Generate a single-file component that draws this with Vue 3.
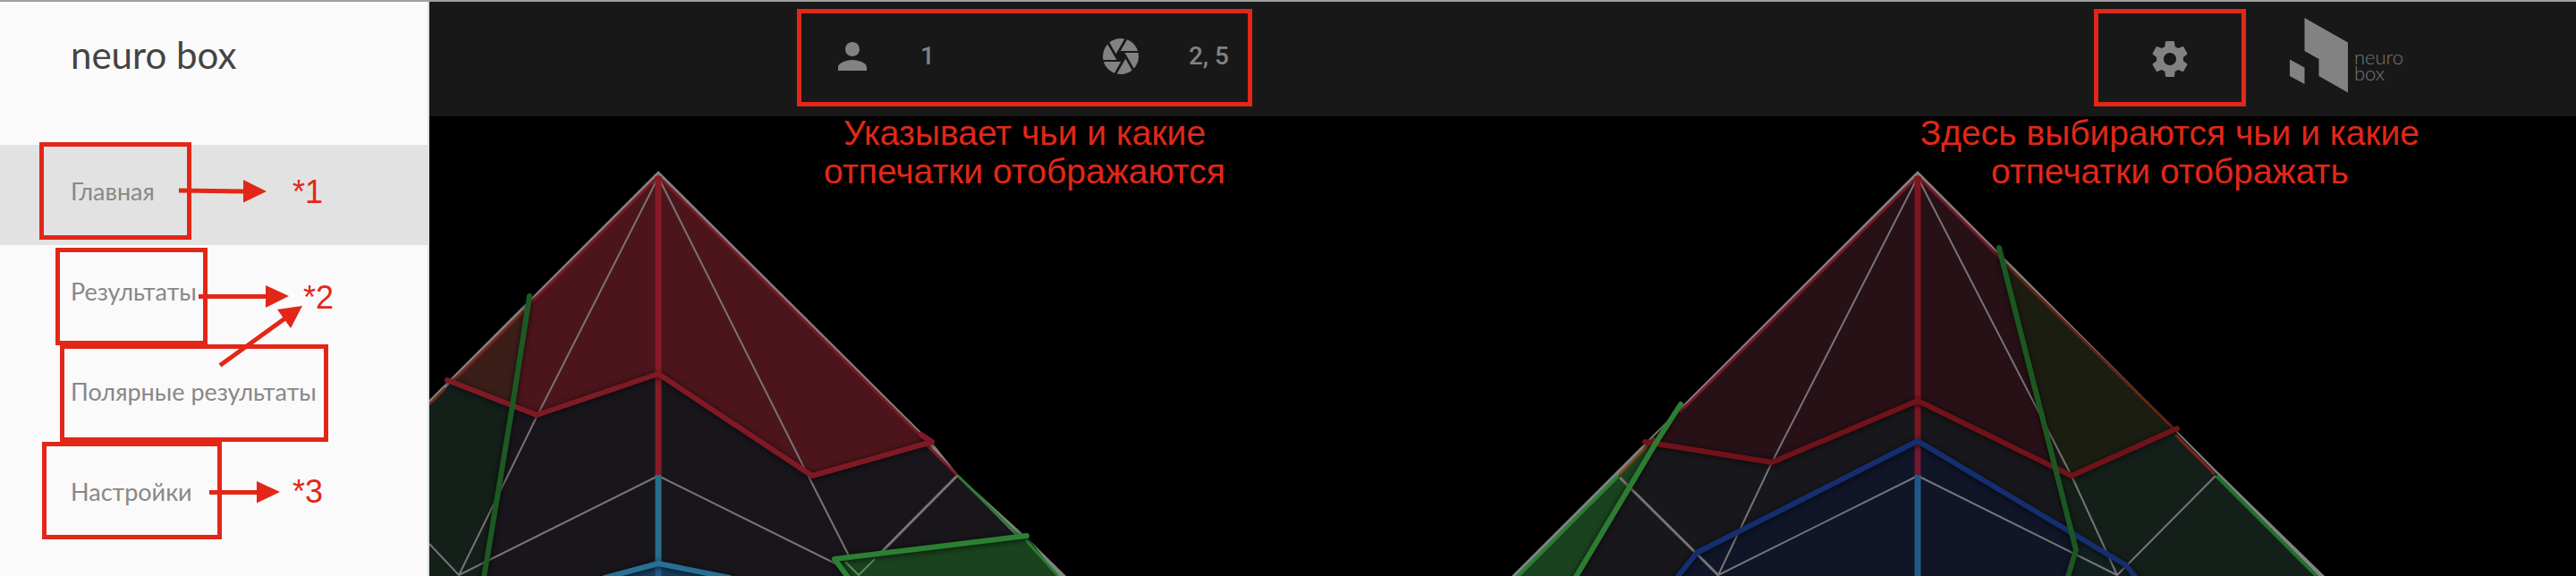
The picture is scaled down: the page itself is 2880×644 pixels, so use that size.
<script setup>
import { ref } from 'vue'

const links = ['Главная', 'Результаты', 'Полярные результаты', 'Настройки']
const active = ref(0)
</script>

<template>
  <div class="page">
    <aside class="sidebar">
      <h1 class="title">neuro box</h1>
      <nav class="nav">
        <a
          v-for="(label, i) in links"
          :key="label"
          href="#"
          class="nav-link"
          :class="{ active: active === i }"
          @click.prevent="active = i"
        >{{ label }}</a>
      </nav>

      <svg class="marks" viewBox="0 0 480 644" aria-hidden="true">
        <g class="mark-line">
          <rect x="46.5" y="161.5" width="165" height="104" />
          <rect x="64.5" y="279.5" width="165" height="104" />
          <rect x="69.5" y="387.5" width="295" height="104" />
          <rect x="49.5" y="496.5" width="196" height="104" />
          <path d="M200 213L273 214M222 331.5H298M246 408.500L320 355M234 550.500H288" />
        </g>
        <g class="mark-head">
          <path d="M272 201L298 214L272 226.500Z" />
          <path d="M297 319L323 331L297 344Z" />
          <path d="M310 346L338 342L325 367Z" />
          <path d="M287 538L313 550L287 562.500Z" />
        </g>
      </svg>
      <span class="note note-1">*1</span>
      <span class="note note-2">*2</span>
      <span class="note note-3">*3</span>
    </aside>

    <main class="main">
      <header class="topbar">
        <div class="frame status">
          <svg class="icon" viewBox="0 0 24 24" aria-hidden="true">
            <path d="M12 12c2.210 0 4-1.790 4-4s-1.790-4-4-4-4 1.790-4 4 1.790 4 4 4zm0 2c-2.670 0-8 1.340-8 4v2h16v-2c0-2.660-5.330-4-8-4z" />
          </svg>
          <span class="value person">1</span>
          <svg class="icon" viewBox="0 0 24 24" aria-hidden="true">
            <path d="M9.400 10.500l4.770-8.260C13.470 2.090 12.750 2 12 2c-2.400 0-4.600.85-6.320 2.250l3.660 6.350.06-.1zM21.540 9c-.92-2.920-3.150-5.260-6-6.340L11.880 9h9.660zm.26 1h-7.490l.29.5 4.760 8.250C21 16.970 22 14.610 22 12c0-.69-.07-1.350-.2-2zM8.540 12l-3.900-6.750C3.010 7.030 2 9.390 2 12c0 .69.07 1.350.2 2h7.490l-1.150-2zm-6.080 3c.92 2.920 3.150 5.260 6 6.340L12.120 15H2.460zm11.270 0l-3.900 6.760c.7.15 1.420.24 2.170.24 2.400 0 4.600-.85 6.320-2.250l-3.660-6.350-.93 1.600z" />
          </svg>
          <span class="value">2, 5</span>
          <p class="caption">Указывает чьи и какие<br />отпечатки отображаются</p>
        </div>

        <div class="frame picker">
          <button class="gear" type="button" aria-label="Настройки">
            <svg class="icon" viewBox="0 0 24 24" aria-hidden="true">
              <path d="M19.430 12.980c.04-.32.07-.64.07-.98s-.03-.66-.07-.98l2.110-1.650c.19-.15.24-.42.12-.64l-2-3.460c-.12-.22-.39-.3-.61-.22l-2.490 1c-.52-.4-1.080-.73-1.690-.98l-.38-2.650C14.460 2.180 14.250 2 14 2h-4c-.25 0-.46.18-.49.42l-.38 2.650c-.61.25-1.170.59-1.690.98l-2.490-1c-.23-.09-.49 0-.61.22l-2 3.460c-.13.22-.07.49.12.64l2.110 1.650c-.04.32-.07.65-.07.98s.03.66.07.98l-2.110 1.650c-.19.15-.24.42-.12.64l2 3.460c.12.22.39.3.61.22l2.490-1c.52.4 1.080.73 1.690.98l.38 2.650c.03.24.24.42.49.42h4c.25 0 .46-.18.49-.42l.38-2.650c.61-.25 1.170-.59 1.690-.98l2.490 1c.23.09.49 0 .61-.22l2-3.460c.12-.22.07-.49-.12-.64l-2.110-1.650zM12 15.500c-1.930 0-3.500-1.570-3.500-3.500s1.570-3.500 3.500-3.500 3.500 1.570 3.500 3.500-1.570 3.500-3.500 3.500z" />
            </svg>
          </button>
          <p class="caption">Здесь выбираются чьи и какие<br />отпечатки отображать</p>
        </div>

        <div class="logo">
          <svg class="logo-mark" viewBox="2560 20 65 84" aria-hidden="true">
            <path d="M2576.500 20L2625 47.500V103.500L2592.500 85V66L2576.500 57ZM2560 66.500L2576.500 75.500V94L2560 85Z" />
          </svg>
          <span class="logo-text">neuro<br />box</span>
        </div>
      </header>

      <svg class="charts" viewBox="480 130 2400 514" aria-hidden="true">
        <!-- left pyramid -->
        <g>
          <path fill="#828282" d="M736 191L480 447V644H1192L1147 600L1072 532L1044 497Z" />
          <path fill="#18161b" d="M736 197L480 453V644H1180L1071 533L1037 500Z" />
          <path fill="#141f19" d="M480 453L504 428L573 453L541 644H480Z" />
          <path fill="#4c151c" d="M736 197L588 345L573 453L600 464L736 418L908 532L1038 494Z" />
          <path fill="#3b1e18" d="M588 345L504 428L573 453Z" />
          <path class="edge" stroke="#7b1a24" d="M590 342L736 197L1034 492" />
          <path class="edge" stroke="#732b1e" d="M586 347L506 426M498 434L480 452" />
          <path class="grid" d="M734 202L601 464L513 643L736 532L960 643L899 523L738 202M480 608L513 643" />
          <path class="grid thick" d="M960 643L1070 532" />
          <path class="line-flat" stroke="#861b27" d="M736 197V532" />
          <path class="line-flat" stroke="#276e8a" d="M736 531V644" />
          <path fill="#173b60" d="M678 646L736 631L816 646Z" />
          <path class="line-flat" stroke="#1f5a8e" d="M736 630V644" />
          <path fill="#19421d" d="M933 625L1148 599L1182 644H948Z" />
          <path class="grid faint" d="M945 628L960 643L978 625" />
          <path class="edge" stroke="#861b27" d="M1037 498L1070 531" />
          <path class="edge" stroke="#2a7c31" d="M1071 532L1138 598M1147 604L1183 644" />
          <g class="raised">
            <path class="line" stroke="#7f1a25" d="M500 425L600 464L736 418L908 532L1042 494L1030 486" />
            <path class="line" stroke="#1d5922" d="M592 331L573 453L541 646" />
            <path class="line" stroke="#267095" d="M676 646L736 630L816 646" />
            <path class="line" stroke="#2c8033" d="M950 648L933 625L1148 599" />
          </g>
        </g>

        <!-- right pyramid -->
        <g>
          <path fill="#828282" d="M2144 191L1690 644H2599L2478 526Z" />
          <path fill="#18171b" d="M2144 197L1697 644H2590L2476 532Z" />
          <path fill="#271116" d="M2144 197L1843 494L1981 517L2144 448L2297 520L2238 288Z" />
          <path fill="#1c1d12" d="M2240 292L2297 520L2316 532L2430 479Z" />
          <path fill="#141f19" d="M2297 520L2316 532L2430 480L2590 644H2312L2321 615Z" />
          <path fill="#101528" d="M2144 493L2317 596L2321 615L2312 644H1875L1897 618Z" />
          <path fill="#10201f" d="M2317 596L2377 632L2387 644H2312L2321 615Z" />
          <path fill="#19421d" d="M1852 490L1697 644H1762Z" />
          <path class="edge" stroke="#791924" d="M1878 461L2144 197L2236 288" />
          <path class="edge" stroke="#632514" d="M2243 296L2430 479" />
          <path class="edge" stroke="#7c2420" d="M2432 486L2476 530" />
          <path class="edge" stroke="#774521" d="M1850 490L1810 531" />
          <path class="edge thick" stroke="#298032" d="M1809 532L1696 645" />
          <path class="edge thick" stroke="#237029" d="M2478 532L2591 645" />
          <path class="grid" d="M2142 202L1981 517L1921 643L2144 532L2367 643L2316 532L2146 202" />
          <path class="grid" d="M2367 643L2477 532" />
          <path class="grid thick" d="M1921 643L1811 534" />
          <path class="line-flat" stroke="#7c151f" d="M2144 197V494" />
          <path class="line-flat" stroke="#711832" d="M2144 494V532" />
          <path class="line-flat" stroke="#1f5888" d="M2144 531V644" />
          <g class="raised">
            <path class="line" stroke="#701219" d="M1839 494L1981 517L2144 448L2316 532L2434 479" />
            <path class="line" stroke="#142f70" d="M1873 648L1897 618L2144 493L2377 632L2388 646" />
            <path class="line" stroke="#2c7c32" d="M1879 452L1852 494L1760 648" />
            <path class="line" stroke="#1c5721" d="M2235 277L2297 520L2321 615L2311 648" />
          </g>
        </g>
      </svg>
    </main>
  </div>
</template>

<style>
body {
  margin: 0;
  background: #000;
}
</style>

<style scoped>
.page {
  display: flex;
  min-height: 100vh;
  box-sizing: border-box;
  border-top: 2px solid #a0a0a0;
  background: #000;
}

.sidebar {
  position: relative;
  flex: none;
  width: 480px;
  box-sizing: border-box;
  border-right: 2px solid #dcdfdf;
  background: #fafafa;
  font-family: Lato, "Open Sans", sans-serif;
}

.title {
  margin: 0;
  padding: 33px 0 0 79px;
  height: 127px;
  color: #444;
  font-size: 42px;
  font-weight: 400;
  line-height: 52px;
}

.nav {
  display: flex;
  flex-direction: column;
}

.nav-link {
  padding: 0 0 8px 79px;
  color: #888;
  font-size: 27px;
  line-height: 104px;
  text-decoration: none;
}

.nav-link.active {
  background: #e2e2e2;
}

.marks {
  position: absolute;
  top: -2px;
  left: 0;
  width: 480px;
  height: 644px;
  pointer-events: none;
}

.mark-line {
  fill: none;
  stroke: #e22718;
  stroke-width: 5;
}

.mark-head {
  fill: #e22718;
}

.note {
  position: absolute;
  color: #e22718;
  font-family: "Liberation Sans", Arial, sans-serif;
  font-size: 36px;
  line-height: 44px;
}

.note-1 {
  top: 191px;
  left: 327px;
}

.note-2 {
  top: 309px;
  left: 339px;
}

.note-3 {
  top: 526px;
  left: 327px;
}

.main {
  flex: 1;
  min-width: 0;
}

.topbar {
  display: flex;
  align-items: flex-start;
  height: 128px;
  box-sizing: border-box;
  padding: 8px 193px 0 411px;
  background: #181818;
}

.frame {
  position: relative;
  display: flex;
  align-items: center;
  height: 109px;
  box-sizing: border-box;
  border: 5px solid #e22718;
}

.status {
  margin-right: auto;
  padding: 0 21px 3px 33px;
}

.picker {
  justify-content: center;
  width: 170px;
  margin-right: 49px;
  padding-top: 3px;
}

.icon {
  display: block;
  width: 48px;
  height: 48px;
  fill: #828282;
}

.value {
  margin-left: 52px;
  color: #828282;
  font-family: Roboto, sans-serif;
  font-size: 28px;
  font-weight: 500;
  line-height: 36px;
}

.person {
  margin-right: 184px;
}

.gear {
  padding: 0;
  border: 0;
  background: none;
  cursor: pointer;
}

.caption {
  position: absolute;
  z-index: 1;
  top: calc(100% + 13px);
  left: 50%;
  margin: 0;
  transform: translateX(-50%);
  color: #e22718;
  font-family: "Liberation Sans", Arial, sans-serif;
  font-size: 39px;
  line-height: 43px;
  text-align: center;
  white-space: nowrap;
}

.logo {
  display: flex;
  gap: 7px;
  padding-top: 10px;
}

.logo-mark {
  width: 65px;
  height: 84px;
  fill: #828282;
}

.logo-text {
  padding-top: 35px;
  color: #777;
  font-family: Lato, sans-serif;
  font-size: 22px;
  font-weight: 300;
  line-height: 18px;
}

.charts {
  display: block;
  width: 100%;
}

.charts path {
  stroke-linejoin: round;
}

.grid {
  fill: none;
  stroke: #777476;
  stroke-width: 2;
}

.grid.thick {
  stroke-width: 3;
}

.grid.faint {
  stroke: #5c8a5f;
}

.edge {
  fill: none;
  stroke-width: 3;
}

.edge.thick {
  stroke-width: 4;
}

.line-flat {
  fill: none;
  stroke-width: 7;
}

.line {
  fill: none;
  stroke-width: 6;
  stroke-linecap: round;
}

.raised {
  filter: drop-shadow(0 1px 3px rgba(0, 0, 0, 0.7));
}
</style>
